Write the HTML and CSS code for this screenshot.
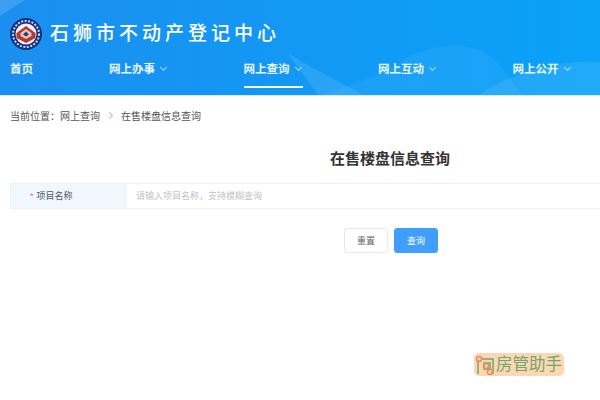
FILE: index.html
```html
<!DOCTYPE html>
<html lang="zh-CN">
<head>
    <meta charset="UTF-8">
    <meta name="viewport" content="width=device-width, initial-scale=1.0">
    <title>在售楼盘信息查询</title>
    <link rel="stylesheet" href="styles.css">
</head>
<body>
    <header class="header">
        <!-- Декор шапки -->
        <svg class="header-bg" width="600" height="95" viewBox="0 0 600 95">
            <path d="M0 0H25L0 16Z" fill="#fff" opacity="0.14"/>
            <path d="M288 53C305 65 345 84 362 95H318C308 80 295 65 288 53Z" fill="#fff" opacity="0.1"/>
            <path d="M322 95C350 85 380 76 400 62C425 46 455 42 480 50C495 56 510 78 522 95Z" fill="#fff" opacity="0.05"/>
            <path d="M478 95C510 75 550 60 600 62V95Z" fill="#fff" opacity="0.09"/>
        </svg>
        <div class="brand">
            <svg class="logo" width="32" height="32" viewBox="0 0 32 32">
                <circle cx="16" cy="16" r="16" fill="#14307f"/>
                <circle cx="16" cy="16" r="13" fill="none" stroke="#c9d3ea" stroke-width="2" stroke-dasharray="2 1.500"/>
                <circle cx="16" cy="16" r="10.500" fill="#f2f2f2"/>
                <path d="M6.500 15L16 8L25.500 15V20L16 25L6.500 20Z" fill="#b5392f"/>
                <path d="M10.500 15L16 11L21.500 15L21.500 18L16 21L10.500 18Z" fill="#e6c7b8"/>
                <path d="M13 16.500L16 13.500L19 16.500L16 18.500Z" fill="#22407f"/>
            </svg>
            <span class="brand-name">石狮市不动产登记中心</span>
        </div>
        <nav class="nav">
            <a class="nav-home" href="#">首页</a>
            <a class="nav-item" href="#">网上办事<i class="chevron"></i></a>
            <a class="nav-item active" href="#">网上查询<i class="chevron"></i></a>
            <a class="nav-item" href="#">网上互动<i class="chevron"></i></a>
            <a class="nav-item" href="#">网上公开<i class="chevron"></i></a>
        </nav>
    </header>

    <div class="breadcrumb">
        <span>当前位置：</span><span>网上查询</span><i class="crumb-sep"></i><span>在售楼盘信息查询</span>
    </div>

    <main class="content">
        <h2>在售楼盘信息查询</h2>
        <form class="search-row">
            <label class="search-label"><em>*</em>项目名称</label>
            <input class="search-input" type="text" placeholder="请输入项目名称，支持模糊查询">
        </form>
        <div class="actions">
            <button class="btn" type="button">重置</button>
            <button class="btn btn-primary" type="button">查询</button>
        </div>
    </main>

    <div class="watermark">
        <svg width="20" height="22" viewBox="0 0 20 22">
            <path d="M4 6V20M8 5H19V19H17M10 9H16V15H10Z" fill="none" stroke="#6fa86a" stroke-width="1.500"/>
            <circle cx="5" cy="5" r="2.500" fill="none" stroke="#f08a5d" stroke-width="1.500"/>
            <circle cx="12" cy="12" r="2.500" fill="none" stroke="#f08a5d" stroke-width="1.500"/>
            <circle cx="16" cy="18" r="2.500" fill="none" stroke="#f08a5d" stroke-width="1.500"/>
        </svg>
        <span>房管助手</span>
    </div>
</body>
</html>
```

FILE: styles.css
```css
body {
    font-family: "Liberation Sans", "Noto Sans CJK SC", sans-serif;
    background-color: #fff;
    margin: 0;
    height: 400px;
    overflow: hidden;
    position: relative;
}
.header {
    position: relative;
    height: 96px;
    box-sizing: border-box;
    padding: 16px 0 0 10px;
    background: linear-gradient(90deg, #1b8ff0, #0aa2f9);
    border-bottom: 1px solid #d3ecfd;
    overflow: hidden;
}
.header-bg {
    position: absolute;
    left: 0;
    top: 0;
}
.brand {
    position: relative;
    display: flex;
    align-items: center;
    gap: 8px;
    height: 36px;
}
.brand-name {
    font-size: 19px;
    letter-spacing: 4px;
    font-weight: 500;
    color: #fff;
    padding-bottom: 6px;
}
.nav {
    position: relative;
    display: flex;
    height: 36px;
}
.nav a {
    flex: none;
    color: #e8f5ff;
    font-size: 11.500px;
    font-weight: 700;
    text-decoration: none;
    line-height: 34px;
}
.nav .nav-home {
    width: 99px;
}
.nav .nav-item {
    width: 134.500px;
    position: relative;
}
.nav .nav-item:last-child {
    width: auto;
}
.nav-item.active::after {
    content: "";
    position: absolute;
    left: 0;
    top: 34px;
    width: 59px;
    height: 2px;
    background-color: #fff;
}
.chevron {
    display: inline-block;
    width: 4px;
    height: 4px;
    margin: 0 0 3px 6px;
    border-right: 1px solid #a9d9fa;
    border-bottom: 1px solid #a9d9fa;
    transform: rotate(45deg);
}
.breadcrumb {
    display: flex;
    align-items: center;
    padding: 12px 10px 0;
    height: 15px;
    font-size: 10px;
    color: #555;
}
.crumb-sep {
    width: 4px;
    height: 4px;
    margin: 0 9px 0 7px;
    border-top: 1px solid #bbb;
    border-right: 1px solid #bbb;
    transform: rotate(45deg);
}
.content {
    margin-left: 10px;
}
h2 {
    margin: 25px 0 13px;
    padding-left: 320px;
    font-size: 15px;
    line-height: 22px;
    color: #333;
}
.search-row {
    display: flex;
    height: 26px;
    box-sizing: border-box;
    border: 1px solid #eef0f4;
    border-right: none;
}
.search-label {
    width: 116px;
    box-sizing: border-box;
    padding-left: 19px;
    background-color: #f0f7ff;
    font-size: 9px;
    line-height: 24px;
    color: #555;
}
.search-label em {
    color: #f56c6c;
    font-style: normal;
    margin-right: 3px;
}
.search-input {
    flex: 1;
    border: none;
    outline: none;
    padding: 0 9px;
    font-family: inherit;
    font-size: 9px;
}
.search-input::placeholder {
    color: #c0c4cc;
}
.actions {
    display: flex;
    gap: 6px;
    margin-top: 19px;
    padding-left: 334px;
}
.btn {
    width: 44px;
    height: 25px;
    padding: 0;
    border: 1px solid #e8eaee;
    border-radius: 3px;
    background-color: #fff;
    color: #666;
    font-family: inherit;
    font-size: 9px;
}
.btn-primary {
    background-color: #409eff;
    border-color: #409eff;
    color: #fff;
}
.watermark {
    position: absolute;
    left: 474px;
    top: 353px;
    width: 90px;
    height: 23px;
    display: flex;
    align-items: center;
    gap: 2px;
    border-radius: 5px;
    background-color: #fdd6b3;
    color: #6fa86a;
    font-size: 16.500px;
    line-height: 23px;
    white-space: nowrap;
}
```
